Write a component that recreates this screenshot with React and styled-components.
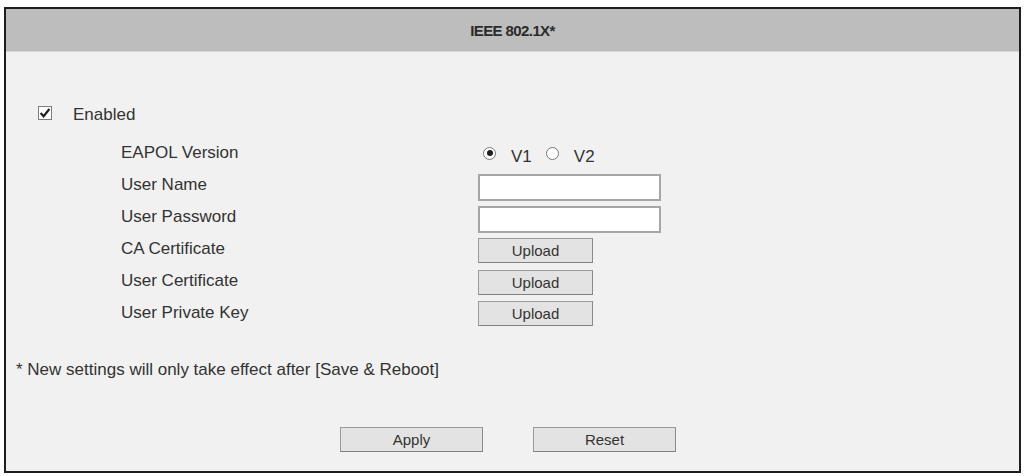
import React from 'react';
import styled, { createGlobalStyle } from 'styled-components';

const GlobalStyle = createGlobalStyle`
    html, body {
        margin: 0;
        padding: 0;
        background: #ffffff;
    }
    body {
        font-family: "Liberation Sans", Arial, sans-serif;
        color: #333333;
    }
`

const Frame = styled.div`
    margin: 7px 5px 0 4px;
    height: 466px;
    box-sizing: border-box;
    border: 2px solid #1e1e1e;
    background: #f1f1f1;
    display: flex;
    flex-direction: column;
`

const Header = styled.div`
    height: 42px;
    background: #bdbdbd;
    border-bottom: 1px solid #d6d6d6;
    display: flex;
    align-items: center;
    justify-content: center;
    font-size: 15px;
    font-weight: bold;
    color: #2b2b2b;
    letter-spacing: -0.6px;
`

const Body = styled.div`
    flex: 1;
    display: flex;
    flex-direction: column;
    padding-top: 53px;
`

const EnableRow = styled.label`
    display: flex;
    align-items: center;
    height: 20px;
    padding-left: 32px;
    font-size: 17px;
    gap: 21px;
`

const Box = styled.span`
    width: 14px;
    height: 14px;
    margin-top: -5px;
    box-sizing: border-box;
    border: 1px solid #7d7d7d;
    background: #fff;
    display: inline-flex;
    align-items: center;
    justify-content: center;
`

const Fields = styled.div`
    margin-top: 12px;
    padding-left: 115px;
    display: grid;
    grid-template-columns: 357px 1fr;
    grid-auto-rows: 32px;
`

const Label = styled.div`
    display: flex;
    align-items: center;
    font-size: 17px;
    color: #333;
`

const Control = styled.div`
    display: flex;
    align-items: center;
    padding-top: ${p => p.$down || 0}px;
`

const RadioGroup = styled.div`
    display: flex;
    align-items: center;
    padding-left: 5px;
    gap: 14px;
`

const RadioItem = styled.label`
    display: flex;
    align-items: center;
    gap: 15px;
    font-size: 17px;
    line-height: 17px;
`

const RadioText = styled.span`
    padding-top: 7px;
`

const Dot = styled.span`
    width: 13px;
    height: 13px;
    box-sizing: border-box;
    border-radius: 50%;
    border: 1px solid #7a7a7a;
    background: #fff;
    display: inline-flex;
    align-items: center;
    justify-content: center;

    &::after {
        content: '';
        width: 6px;
        height: 6px;
        border-radius: 50%;
        background: ${p => (p.$on ? '#1f1f1f' : 'transparent')};
    }
`

const TextBox = styled.input`
    width: 183px;
    height: 27px;
    box-sizing: border-box;
    border: 2px solid #a6a6a6;
    background: #fff;
    outline: none;
    padding: 0 4px;
`

const Button = styled.button`
    width: ${p => p.$w}px;
    height: 25px;
    box-sizing: border-box;
    border: 1px solid #9a9a9a;
    border-bottom-color: #808080;
    border-right-color: #8a8a8a;
    background: #e3e3e3;
    font-family: "Liberation Sans", Arial, sans-serif;
    font-size: 15px;
    color: #333;
    padding: 0;
`

const Note = styled.div`
    margin-top: 33px;
    padding-left: 10px;
    font-size: 17px;
    height: 16px;
    line-height: 16px;
`

const Actions = styled.div`
    margin-top: 49px;
    display: flex;
    justify-content: center;
    gap: 50px;
    padding-right: 9px;
`

const Check = () => (
    <svg width="12" height="12" viewBox="0 0 12 12">
        <path d="M1.6 6 L4.6 9.2 L10.4 2" fill="none" stroke="#222" strokeWidth="2.2" />
    </svg>
)

const IEEE8021X = () => {
    return (
        <Frame>
            <Header>IEEE 802.1X*</Header>
            <Body>
                <EnableRow>
                    <Box><Check /></Box>
                    Enabled
                </EnableRow>

                <Fields>
                    <Label>EAPOL Version</Label>
                    <Control>
                        <RadioGroup>
                            <RadioItem><Dot $on /><RadioText>V1</RadioText></RadioItem>
                            <RadioItem><Dot /><RadioText>V2</RadioText></RadioItem>
                        </RadioGroup>
                    </Control>

                    <Label>User Name</Label>
                    <Control $down={4}><TextBox type="text" /></Control>

                    <Label>User Password</Label>
                    <Control $down={4}><TextBox type="password" /></Control>

                    <Label>CA Certificate</Label>
                    <Control $down={2}><Button $w={115}>Upload</Button></Control>

                    <Label>User Certificate</Label>
                    <Control $down={2}><Button $w={115}>Upload</Button></Control>

                    <Label>User Private Key</Label>
                    <Control><Button $w={115}>Upload</Button></Control>
                </Fields>

                <Note>* New settings will only take effect after [Save &amp; Reboot]</Note>

                <Actions>
                    <Button $w={143}>Apply</Button>
                    <Button $w={143}>Reset</Button>
                </Actions>
            </Body>
        </Frame>
    )
}

export default function App() {
    return (
        <>
            <GlobalStyle />
            <IEEE8021X />
        </>
    )
}
